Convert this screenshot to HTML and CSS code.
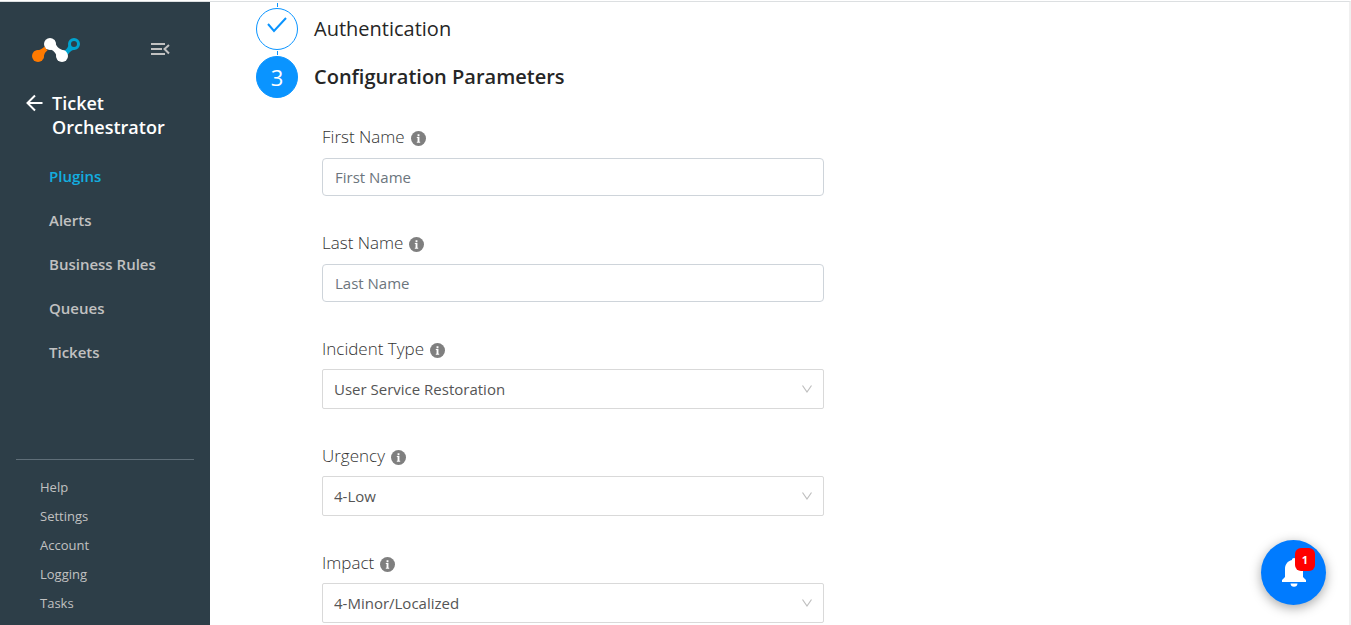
FILE: index.html
```html
<!DOCTYPE html>
<html lang="en">
<head>
<meta charset="utf-8">
<title>Ticket Orchestrator</title>
<meta name="viewport" content="width=device-width, initial-scale=1">
<link rel="stylesheet" href="styles.css">
</head>
<body>
<svg class="sprite" width="0" height="0" aria-hidden="true">
  <symbol id="info" viewBox="0 0 16 16"><circle cx="8" cy="8" r="8" fill="#7f7f7f"/><path d="M7 3.500h2v2H7zM6.200 6.500H9v5h.8v1H6.200v-1H7v-4h-.8z" fill="#fff"/></symbol>
  <symbol id="chevron" viewBox="0 0 12 12"><path d="M1.500 2.500 6 9l4.500-6.500" fill="none" stroke="#bfbfbf" stroke-width="1.200"/></symbol>
</svg>
<div class="app">
  <aside class="sidebar">
    <div class="brand">
      <svg width="48" height="24" viewBox="0 0 48 24" role="img" aria-label="Netskope">
        <path d="M2 13.500C7 12 9 12 12.500 8.500l3 4c-4 3-3 5-4.500 9z" fill="#ff7a00"/>
        <circle cx="6" cy="18" r="6" fill="#ff7a00"/>
        <path d="M32 13c3-2 4-4 5-7l6 6c-4 0-5 2-7.500 5z" fill="#00a3cf"/>
        <circle cx="42" cy="6" r="4.500" fill="#2d3e48" stroke="#00a3cf" stroke-width="3"/>
        <path d="M22.500 2c1.500 6 3 9 11.500 11l-8.500 9c-1-7-3-10-11.500-12z" fill="#fff"/>
        <circle cx="18" cy="6" r="6" fill="#fff"/>
        <circle cx="30" cy="18" r="6" fill="#fff"/>
      </svg>
      <button class="icon-button" type="button" aria-label="Collapse menu">
        <svg width="19" height="14" viewBox="0 0 19 14" fill="none" stroke="#c1c1c1" stroke-width="2"><path d="M0 2h14M0 7h11M0 12h14M18 3 13.500 7l4.500 4.500"/></svg>
      </button>
    </div>
    <a class="title" href="#">
      <svg width="18" height="24" viewBox="0 0 18 24" fill="none" stroke="#fff" stroke-width="2"><path d="M16.500 12H2M9 4.500 1.500 12 9 19.500"/></svg>
      <span>Ticket Orchestrator</span>
    </a>
    <nav class="menu">
      <a class="active" href="#">Plugins</a>
      <a href="#">Alerts</a>
      <a href="#">Business Rules</a>
      <a href="#">Queues</a>
      <a href="#">Tickets</a>
    </nav>
    <nav class="submenu">
      <a href="#">Help</a>
      <a href="#">Settings</a>
      <a href="#">Account</a>
      <a href="#">Logging</a>
      <a href="#">Tasks</a>
    </nav>
  </aside>
  <main class="content">
    <ol class="steps">
      <li class="step">
        <span class="marker"><svg width="20" height="16" viewBox="0 0 20 16" fill="none" stroke="#0a94ff" stroke-width="2"><path d="M1 7l6 7L19 1"/></svg></span>
        <span>Authentication</span>
      </li>
      <li class="step current">
        <span class="marker">3</span>
        <span>Configuration Parameters</span>
      </li>
    </ol>
    <form class="form">
      <div class="field">
        <div class="label-row"><label for="first">First Name</label><svg class="info"><use href="#info"/></svg></div>
        <input id="first" type="text" placeholder="First Name">
      </div>
      <div class="field">
        <div class="label-row"><label for="last">Last Name</label><svg class="info"><use href="#info"/></svg></div>
        <input id="last" type="text" placeholder="Last Name">
      </div>
      <div class="field choice">
        <div class="label-row"><label for="type">Incident Type</label><svg class="info"><use href="#info"/></svg></div>
        <div class="select"><select id="type"><option>User Service Restoration</option></select><svg class="chevron"><use href="#chevron"/></svg></div>
      </div>
      <div class="field choice">
        <div class="label-row"><label for="urgency">Urgency</label><svg class="info"><use href="#info"/></svg></div>
        <div class="select"><select id="urgency"><option>4-Low</option></select><svg class="chevron"><use href="#chevron"/></svg></div>
      </div>
      <div class="field choice">
        <div class="label-row"><label for="impact">Impact</label><svg class="info"><use href="#info"/></svg></div>
        <div class="select"><select id="impact"><option>4-Minor/Localized</option></select><svg class="chevron"><use href="#chevron"/></svg></div>
      </div>
    </form>
  </main>
</div>
<button class="bell" type="button" aria-label="Notifications">
  <svg width="26" height="30" viewBox="0 0 26 30" fill="#fff"><path d="M13 0c1.300 0 2 .8 2 2 4.500 1 7 4.500 7 9v8l3 3v2H1v-2l3-3v-8c0-4.500 2.500-8 7-9 0-1.200.7-2 2-2zM9.500 25.500h7c0 2-1.500 3.300-3.500 3.300s-3.500-1.300-3.500-3.300z"/></svg>
  <span class="badge">1</span>
</button>
</body>
</html>
```
FILE: styles.css
```css
* { box-sizing: border-box; }
body {
  margin: 0;
  background: #fff;
  color: #262626;
  font-family: "Segoe UI", "Open Sans", "Noto Sans", sans-serif;
  font-size: 15px;
}
a { color: inherit; text-decoration: none; }
button { padding: 0; border: 0; font: inherit; cursor: pointer; }
svg { display: block; flex: none; }
.sprite { position: absolute; }

.app {
  display: flex;
  min-height: 100vh;
  padding-top: 1px;
}
.sidebar {
  display: flex;
  flex-direction: column;
  flex: none;
  width: 210px;
  padding: 36px 16px 7px;
  background: #2d3e48;
  border-top: 1px solid #dcdfe1;
  color: #c1c1c1;
}
.brand {
  display: flex;
  align-items: flex-start;
  justify-content: space-between;
  padding: 0 24px 0 16px;
}
.icon-button { padding-top: 4px; background: none; }
.title {
  display: flex;
  align-items: flex-start;
  gap: 8px;
  margin: 29px 0 0 10px;
  color: #fff;
  font-size: 18px;
  font-weight: 600;
  line-height: 24px;
}
.menu {
  display: flex;
  flex-direction: column;
  margin-top: 15px;
  padding-left: 33px;
  font-size: 15px;
  font-weight: 600;
  line-height: 44px;
}
.menu .active { color: #13aee0; }
.submenu {
  display: flex;
  flex-direction: column;
  margin-top: auto;
  padding: 13px 0 0 24px;
  border-top: 1px solid #5f6e78;
  font-size: 13px;
  line-height: 29px;
}

.content {
  flex: 1;
  min-width: 0;
  padding: 0 46px;
  border-top: 1px solid #dcdfe1;
  border-right: 2px solid #f0f0f0;
}
.steps {
  margin: 0;
  padding: 0;
  list-style: none;
}
.step {
  position: relative;
  display: flex;
  align-items: center;
  gap: 16px;
  padding-top: 6px;
  font-size: 20px;
  line-height: 28px;
}
.step::before {
  content: "";
  position: absolute;
  top: 1px;
  left: 21px;
  width: 1px;
  height: 4px;
  background: #0a94ff;
}
.marker {
  display: flex;
  align-items: center;
  justify-content: center;
  width: 42px;
  height: 42px;
  border: 1px solid #0a94ff;
  border-radius: 50%;
}
.marker svg { margin-bottom: 8px; }
.current { font-weight: 600; }
.current .marker {
  background: #0a94ff;
  color: #fff;
  font-size: 22px;
  font-weight: 400;
}

.form {
  max-width: 568px;
  padding: 27px 0 0 66px;
}
.field { margin-bottom: 35px; }
.choice:last-child { margin-bottom: 0; }
.label-row {
  display: flex;
  align-items: center;
  gap: 6px;
  margin-bottom: 9px;
  color: #333;
  font-size: 17px;
  font-weight: 300;
  line-height: 24px;
}
.choice .label-row { margin-bottom: 8px; }
.info { width: 15px; height: 15px; margin-top: 2px; }
input,
select {
  display: block;
  width: 100%;
  height: 38px;
  padding: 0 12px;
  border: 1px solid #ced4da;
  border-radius: 4px;
  background: #fff;
  color: #555;
  font: inherit;
}
input::placeholder { color: #6c757d; opacity: 1; }
.select { display: grid; align-items: center; }
select {
  grid-area: 1 / 1;
  height: 40px;
  padding: 0 11px;
  border-color: #d9d9d9;
  border-radius: 2px;
  appearance: none;
}
.chevron {
  grid-area: 1 / 1;
  justify-self: end;
  width: 12px;
  height: 12px;
  margin-right: 11px;
  pointer-events: none;
}

.bell {
  position: fixed;
  right: 25px;
  bottom: 20px;
  display: flex;
  align-items: center;
  justify-content: center;
  width: 65px;
  height: 65px;
  border-radius: 50%;
  background: #007bff;
  box-shadow: 0 3px 12px rgba(0, 0, 0, 0.35);
}
.badge {
  position: absolute;
  top: 8px;
  right: 11px;
  width: 20px;
  border-radius: 6px;
  background: #f00;
  color: #fff;
  font-size: 11px;
  font-weight: 700;
  line-height: 23px;
}
```
